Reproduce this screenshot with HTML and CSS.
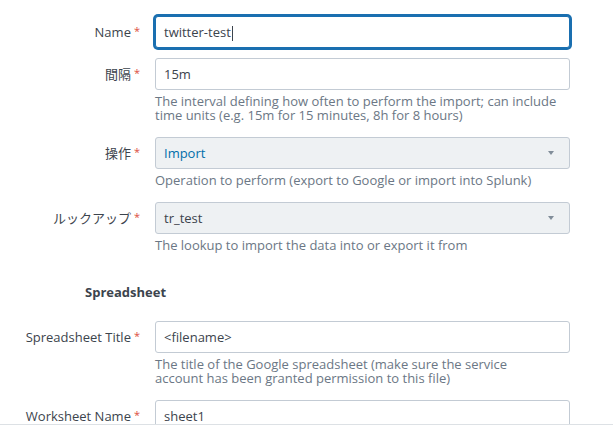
FILE: index.html
```html
<!DOCTYPE html>
<html lang="ja">
<head>
<meta charset="utf-8">
<title>Lookup export form</title>
<link rel="stylesheet" href="styles.css">
</head>
<body>
<div class="page">
  <form class="form">
    <div class="row row-first">
      <label class="label">Name<span class="req">*</span></label>
      <div class="control">
        <div class="input focused">twitter-test<span class="caret"></span></div>
      </div>
    </div>
    <div class="row">
      <label class="label">間隔<span class="req">*</span></label>
      <div class="control">
        <div class="input">15m</div>
        <p class="help">The interval defining how often to perform the import; can include time units (e.g. 15m for 15 minutes, 8h for 8 hours)</p>
      </div>
    </div>
    <div class="row">
      <label class="label">操作<span class="req">*</span></label>
      <div class="control">
        <div class="select"><span class="select-value accent">Import</span><span class="tri"></span></div>
        <p class="help">Operation to perform (export to Google or import into Splunk)</p>
      </div>
    </div>
    <div class="row">
      <label class="label">ルックアップ<span class="req">*</span></label>
      <div class="control">
        <div class="select"><span class="select-value">tr_test</span><span class="tri"></span></div>
        <p class="help">The lookup to import the data into or export it from</p>
      </div>
    </div>
    <h3 class="section">Spreadsheet</h3>
    <div class="row">
      <label class="label">Spreadsheet Title<span class="req">*</span></label>
      <div class="control">
        <div class="input">&lt;filename&gt;</div>
        <p class="help">The title of the Google spreadsheet (make sure the service account has been granted permission to this file)</p>
      </div>
    </div>
    <div class="row">
      <label class="label">Worksheet Name<span class="req">*</span></label>
      <div class="control">
        <div class="input">sheet1</div>
      </div>
    </div>
  </form>
</div>
</body>
</html>
```

FILE: styles.css
```css
* { box-sizing: border-box; }
html, body { margin: 0; padding: 0; background: #ffffff; }
body {
  font-family: "Open Sans", "Noto Sans CJK JP", sans-serif;
  color: #3c444d;
  font-size: 13px;
}
.page {
  height: 425px;
  overflow: hidden;
  border-bottom: 1px solid #dde1e5;
}
.form {
  padding-top: 16px;
}
.row {
  display: flex;
  align-items: flex-start;
  margin-bottom: 15px;
}
.row-first { margin-bottom: 10px; }
.label {
  width: 140px;
  flex: none;
  text-align: right;
  height: 32px;
  line-height: 32px;
  white-space: nowrap;
}
.req {
  color: #dc4e41;
  font-size: 11px;
  margin-left: 3px;
  position: relative;
  top: -2px;
}
.control {
  margin-left: 15px;
  width: 415px;
  flex: none;
}
.input {
  height: 32px;
  border: 1px solid #c3cbd4;
  border-radius: 3px;
  background: #ffffff;
  padding: 0 8px;
  line-height: 30px;
  color: #3c444d;
  white-space: nowrap;
}
.input.focused {
  border-color: #1a6fb0;
  box-shadow: 0 0 0 2px #1a6fb0;
}
.caret {
  display: inline-block;
  width: 1px;
  height: 15px;
  background: #3c444d;
  vertical-align: middle;
  margin-left: 1px;
}
.select {
  height: 32px;
  border: 1px solid #c3cbd4;
  border-radius: 3px;
  background: #eef1f3;
  padding: 0 8px;
  line-height: 30px;
  display: flex;
  justify-content: space-between;
  align-items: center;
}
.select-value { color: #3c444d; }
.select-value.accent { color: #006eaa; }
.tri {
  width: 0;
  height: 0;
  border-left: 3px solid transparent;
  border-right: 3px solid transparent;
  border-top: 4px solid #818d99;
  margin-right: 7px;
}
.help {
  margin: 4px 0 0;
  max-width: 402px;
  font-size: 13px;
  line-height: 14px;
  color: #6b7785;
}
.section {
  margin: 33px 0 22px;
  padding-left: 85px;
  font-size: 13px;
  font-weight: 700;
  line-height: 14px;
  color: #3c444d;
}
```
